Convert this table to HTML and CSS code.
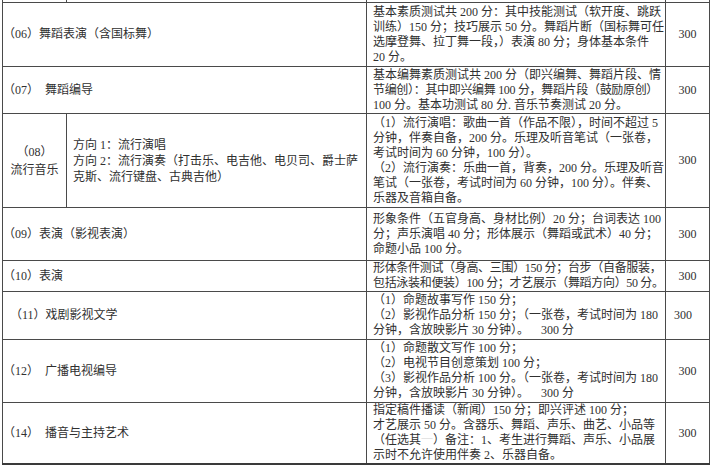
FILE: index.html
```html
<!DOCTYPE html>
<html lang="zh-CN">
<head>
<meta charset="utf-8">
<link rel="stylesheet" href="styles.css">
</head>
<body>
<table class="grid">
  <colgroup>
    <col class="c-a"><col class="c-b"><col class="c-desc"><col class="c-score">
  </colgroup>
  <tr class="stub"><td></td><td></td><td></td><td></td></tr>
  <tr class="r06">
    <td colspan="2" class="name">（06）舞蹈表演（含国标舞）</td>
    <td class="desc">基本素质测试共 200 分：其中技能测试（软开度、跳跃<br>训练）150 分；技巧展示 50 分。舞蹈片断（国标舞可任<br>选摩登舞、拉丁舞一段，）表演 80 分；身体基本条件<br>20 分。</td>
    <td class="score">300</td>
  </tr>
  <tr class="r07">
    <td colspan="2" class="name">（07）&nbsp; 舞蹈编导</td>
    <td class="desc">基本编舞素质测试共 200 分（即兴编舞、舞蹈片段、情<br><span class="squeeze">节编创）：其中即兴编舞 100 分，舞蹈片段（鼓励原创）</span><br>100 分。基本功测试 80 分. 音乐节奏测试 20 分。</td>
    <td class="score">300</td>
  </tr>
  <tr class="r08">
    <td class="sub-name">（08）<br>流行音乐</td>
    <td class="sub-dir">方向 1：流行演唱<br>方向 2：流行演奏（打击乐、电吉他、电贝司、爵士萨<br>克斯、流行键盘、古典吉他）</td>
    <td class="desc">（1）流行演唱：歌曲一首（作品不限），时间不超过 5<br>分钟，伴奏自备，200 分。乐理及听音笔试（一张卷，<br>考试时间为 60 分钟，100 分）。<br>（2）流行演奏：乐曲一首，背奏，200 分。乐理及听音<br>笔试（一张卷，考试时间为 60 分钟，100 分）。伴奏、<br>乐器及音箱自备。</td>
    <td class="score">300</td>
  </tr>
  <tr class="r09">
    <td colspan="2" class="name">（09）表演（影视表演）</td>
    <td class="desc">形象条件（五官身高、身材比例）20 分；台词表达 100<br>分；声乐演唱 40 分；形体展示（舞蹈或武术）40 分；<br>命题小品 100 分。</td>
    <td class="score">300</td>
  </tr>
  <tr class="r10">
    <td colspan="2" class="name">（10）表演</td>
    <td class="desc"><span class="squeeze">形体条件测试（身高、三围）150 分；台步（自备服装，</span><br><span class="squeeze">包括泳装和便装）100 分；才艺展示（舞蹈方向）50 分。</span></td>
    <td class="score">300</td>
  </tr>
  <tr class="r11">
    <td colspan="2" class="name name-indent">（11）戏剧影视文学</td>
    <td class="desc">（1）命题故事写作 150 分；<br>（2）影视作品分析 150 分；（一张卷，考试时间为 180<br>分钟，含放映影片 30 分钟）。&nbsp;&nbsp;&nbsp; 300 分</td>
    <td class="score score-left">300</td>
  </tr>
  <tr class="r12">
    <td colspan="2" class="name">（12）&nbsp; 广播电视编导</td>
    <td class="desc">（1）命题散文写作 100 分；<br>（2）电视节目创意策划 100 分；<br>（3）影视作品分析 100 分。（一张卷，考试时间为 180<br>分钟，含放映影片 30 分钟）。&nbsp;&nbsp;&nbsp; 300 分</td>
    <td class="score">300</td>
  </tr>
  <tr class="r14">
    <td colspan="2" class="name">（14）&nbsp; 播音与主持艺术</td>
    <td class="desc">指定稿件播读（新闻）150 分；即兴评述 100 分；<br>才艺展示 50 分。含器乐、舞蹈、声乐、曲艺、小品等<br>（任选其<span class="faint">一</span>）备注：1、考生进行舞蹈、声乐、小品展<br>示时不允许使用伴奏 2、乐器自备。</td>
    <td class="score">300</td>
  </tr>
</table>
</body>
</html>
```

FILE: styles.css
```css
html, body {
  margin: 0;
  padding: 0;
  background: #ffffff;
}

body {
  font-family: "Liberation Serif", "Noto Sans CJK SC", serif;
  font-size: 12px;
  color: #303030;
}

.grid {
  margin-left: 2px;
  border-collapse: collapse;
  table-layout: fixed;
  width: 707px;
}

.c-a { width: 64px; }
.c-b { width: 300px; }
.c-desc { width: 299px; }
.c-score { width: 44px; }

.grid td {
  border: 1.5px solid #4a4a4a;
  padding: 0;
  vertical-align: middle;
  line-height: 15px;
  white-space: nowrap;
  overflow: hidden;
}

.stub td {
  border-top: none;
  height: 2px;
  line-height: 0;
}

.r06 td { height: 63px; }
.r07 td { height: 46px; }
.r08 td { height: 93px; }
.r09 td { height: 52px; }
.r10 td { height: 30px; }
.r11 td { height: 47px; }
.r12 td { height: 62px; }
.r14 td { height: 59px; }

.r14 td { border-bottom: 2px solid #3a3a3a; }

.name {
  padding-left: 0;
}

.name-indent {
  padding-left: 7px !important;
}

.desc {
  padding-left: 6px !important;
}

.squeeze {
  letter-spacing: -0.32px;
}

.score {
  text-align: center;
}

.score-left {
  text-align: left;
  padding-left: 8px !important;
}

.sub-name {
  text-align: center;
  line-height: 18px !important;
}

.sub-dir {
  padding-left: 6px !important;
  line-height: 16px !important;
}

.faint {
  color: #e4e4e4;
}
```
